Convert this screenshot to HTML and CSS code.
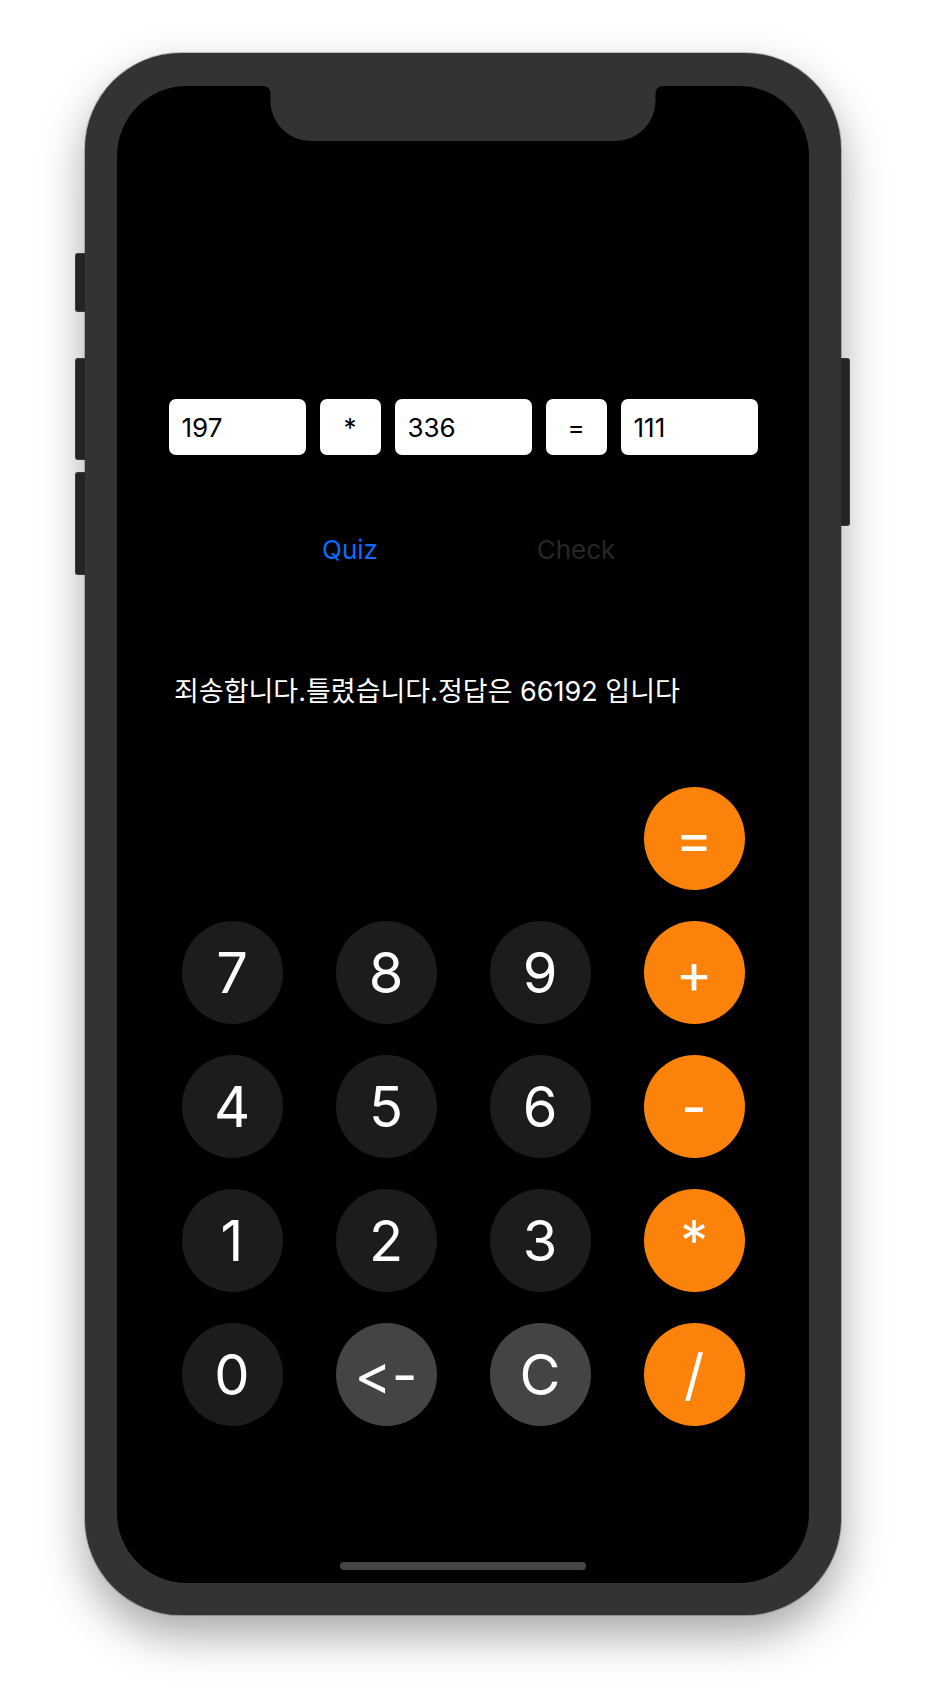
FILE: index.html
```html
<!DOCTYPE html>
<html lang="ko">
<head>
<meta charset="utf-8">
<title>Quiz Calculator</title>
<link rel="stylesheet" href="styles.css">
</head>
<body>
<div class="stage">
  <div class="phone">
    <span class="side-btn left mute"></span>
    <span class="side-btn left vol-up"></span>
    <span class="side-btn left vol-down"></span>
    <span class="side-btn right power"></span>
    <div class="screen">
      <svg class="notch" viewBox="0 0 401 55" xmlns="http://www.w3.org/2000/svg" aria-hidden="true">
        <path d="M0 0 H401 Q393 0 393 8 V15 A40 40 0 0 1 353 55 H48 A40 40 0 0 1 8 15 V8 Q8 0 0 0 Z" fill="#333333"/>
      </svg>

      <div class="equation">
        <div class="field">197</div>
        <div class="field op">*</div>
        <div class="field">336</div>
        <div class="field op">=</div>
        <div class="field">111</div>
      </div>

      <div class="actions">
        <div class="cell"></div>
        <div class="cell"><button class="link quiz">Quiz</button></div>
        <div class="cell"></div>
        <div class="cell"><button class="link check" disabled>Check</button></div>
        <div class="cell"></div>
      </div>

      <p class="message">죄송합니다.틀렸습니다.정답은 66192 입니다</p>

      <div class="keypad">
        <button class="key orange k-eq">=</button>
        <button class="key dark">7</button>
        <button class="key dark">8</button>
        <button class="key dark">9</button>
        <button class="key orange">+</button>
        <button class="key dark">4</button>
        <button class="key dark">5</button>
        <button class="key dark">6</button>
        <button class="key orange">-</button>
        <button class="key dark">1</button>
        <button class="key dark">2</button>
        <button class="key dark">3</button>
        <button class="key orange">*</button>
        <button class="key dark">0</button>
        <button class="key gray">&lt;-</button>
        <button class="key gray">C</button>
        <button class="key orange">/</button>
      </div>

      <div class="home-indicator"></div>
    </div>
  </div>
</div>
</body>
</html>
```

FILE: styles.css
```css
* {
  box-sizing: border-box;
}

html,
body {
  margin: 0;
  padding: 0;
}

body {
  width: 926px;
  height: 1702px;
  overflow: hidden;
  background: #ffffff;
  font-family: Inter, "Noto Sans", "Noto Sans CJK KR", sans-serif;
  font-feature-settings: "calt" 0, "liga" 0;
  font-variant-ligatures: none;
}

.stage {
  display: flex;
  justify-content: center;
  padding-top: 53px;
}

.phone {
  position: relative;
  width: 756px;
  height: 1562px;
  padding: 33px 32px 32px;
  background: #333333;
  border-radius: 96px;
  box-shadow: 0 0 0 1px rgba(0, 0, 0, 0.22), 0 20px 45px rgba(0, 0, 0, 0.35);
}

.side-btn {
  position: absolute;
  background: #242424;
  border: 1px solid #3c3c3c;
}

.side-btn.left {
  left: -10px;
  width: 10px;
  border-right: none;
  border-radius: 3px 0 0 3px;
}

.side-btn.right {
  right: -9px;
  width: 9px;
  border-left: none;
  border-radius: 0 3px 3px 0;
}

.mute {
  top: 200px;
  height: 59px;
}

.vol-up {
  top: 305px;
  height: 102px;
}

.vol-down {
  top: 419px;
  height: 103px;
}

.power {
  top: 305px;
  height: 168px;
}

.screen {
  position: relative;
  width: 692px;
  height: 1497px;
  background: #000000;
  border-radius: 70px;
  overflow: hidden;
  display: flex;
  flex-direction: column;
  align-items: center;
}

.notch {
  position: absolute;
  top: 0;
  left: 50%;
  width: 401px;
  height: 55px;
  transform: translateX(-50%);
}

.equation,
.actions {
  display: grid;
  grid-template-columns: 137px 61px 137px 61px 137px;
  column-gap: 14px;
}

.equation {
  margin-top: 313px;
}

.field {
  height: 56px;
  display: flex;
  align-items: center;
  padding-left: 13px;
  background: #ffffff;
  border-radius: 7px;
  color: #000000;
  font-size: 26px;
}

.field.op {
  justify-content: center;
  padding-left: 0;
}

.actions {
  margin-top: 80px;
  height: 30px;
}

.cell {
  display: flex;
  justify-content: center;
}

.link {
  padding: 0;
  border: 0;
  background: none;
  font-family: inherit;
  font-feature-settings: inherit;
  font-size: 26px;
  line-height: 30px;
  white-space: nowrap;
}

.quiz {
  color: #0a6cff;
}

.check {
  color: #272727;
}

.message {
  align-self: flex-start;
  margin: 108px 0 0 57px;
  color: #ffffff;
  font-family: Inter, "Noto Sans CJK KR", sans-serif;
  font-size: 27px;
  line-height: 38px;
  white-space: nowrap;
}

.keypad {
  margin-top: 76px;
  display: grid;
  grid-template-columns: repeat(4, 101px);
  grid-auto-rows: 103px;
  column-gap: 53px;
  row-gap: 31px;
}

.k-eq {
  grid-column: 4;
}

.key {
  display: flex;
  align-items: center;
  justify-content: center;
  padding: 0;
  border: 0;
  border-radius: 50%;
  color: #ffffff;
  font-family: Inter, "Noto Sans", sans-serif;
  font-feature-settings: "calt" 0, "liga" 0;
  font-variant-ligatures: none;
  font-size: 56px;
  font-weight: 400;
  line-height: 1;
}

.key.dark {
  background: #1c1c1e;
}

.key.gray {
  background: #444444;
}

.key.orange {
  background: #fc830b;
}

.home-indicator {
  margin-top: auto;
  margin-bottom: 13px;
  width: 246px;
  height: 8px;
  border-radius: 4px;
  background: #454545;
}
```
